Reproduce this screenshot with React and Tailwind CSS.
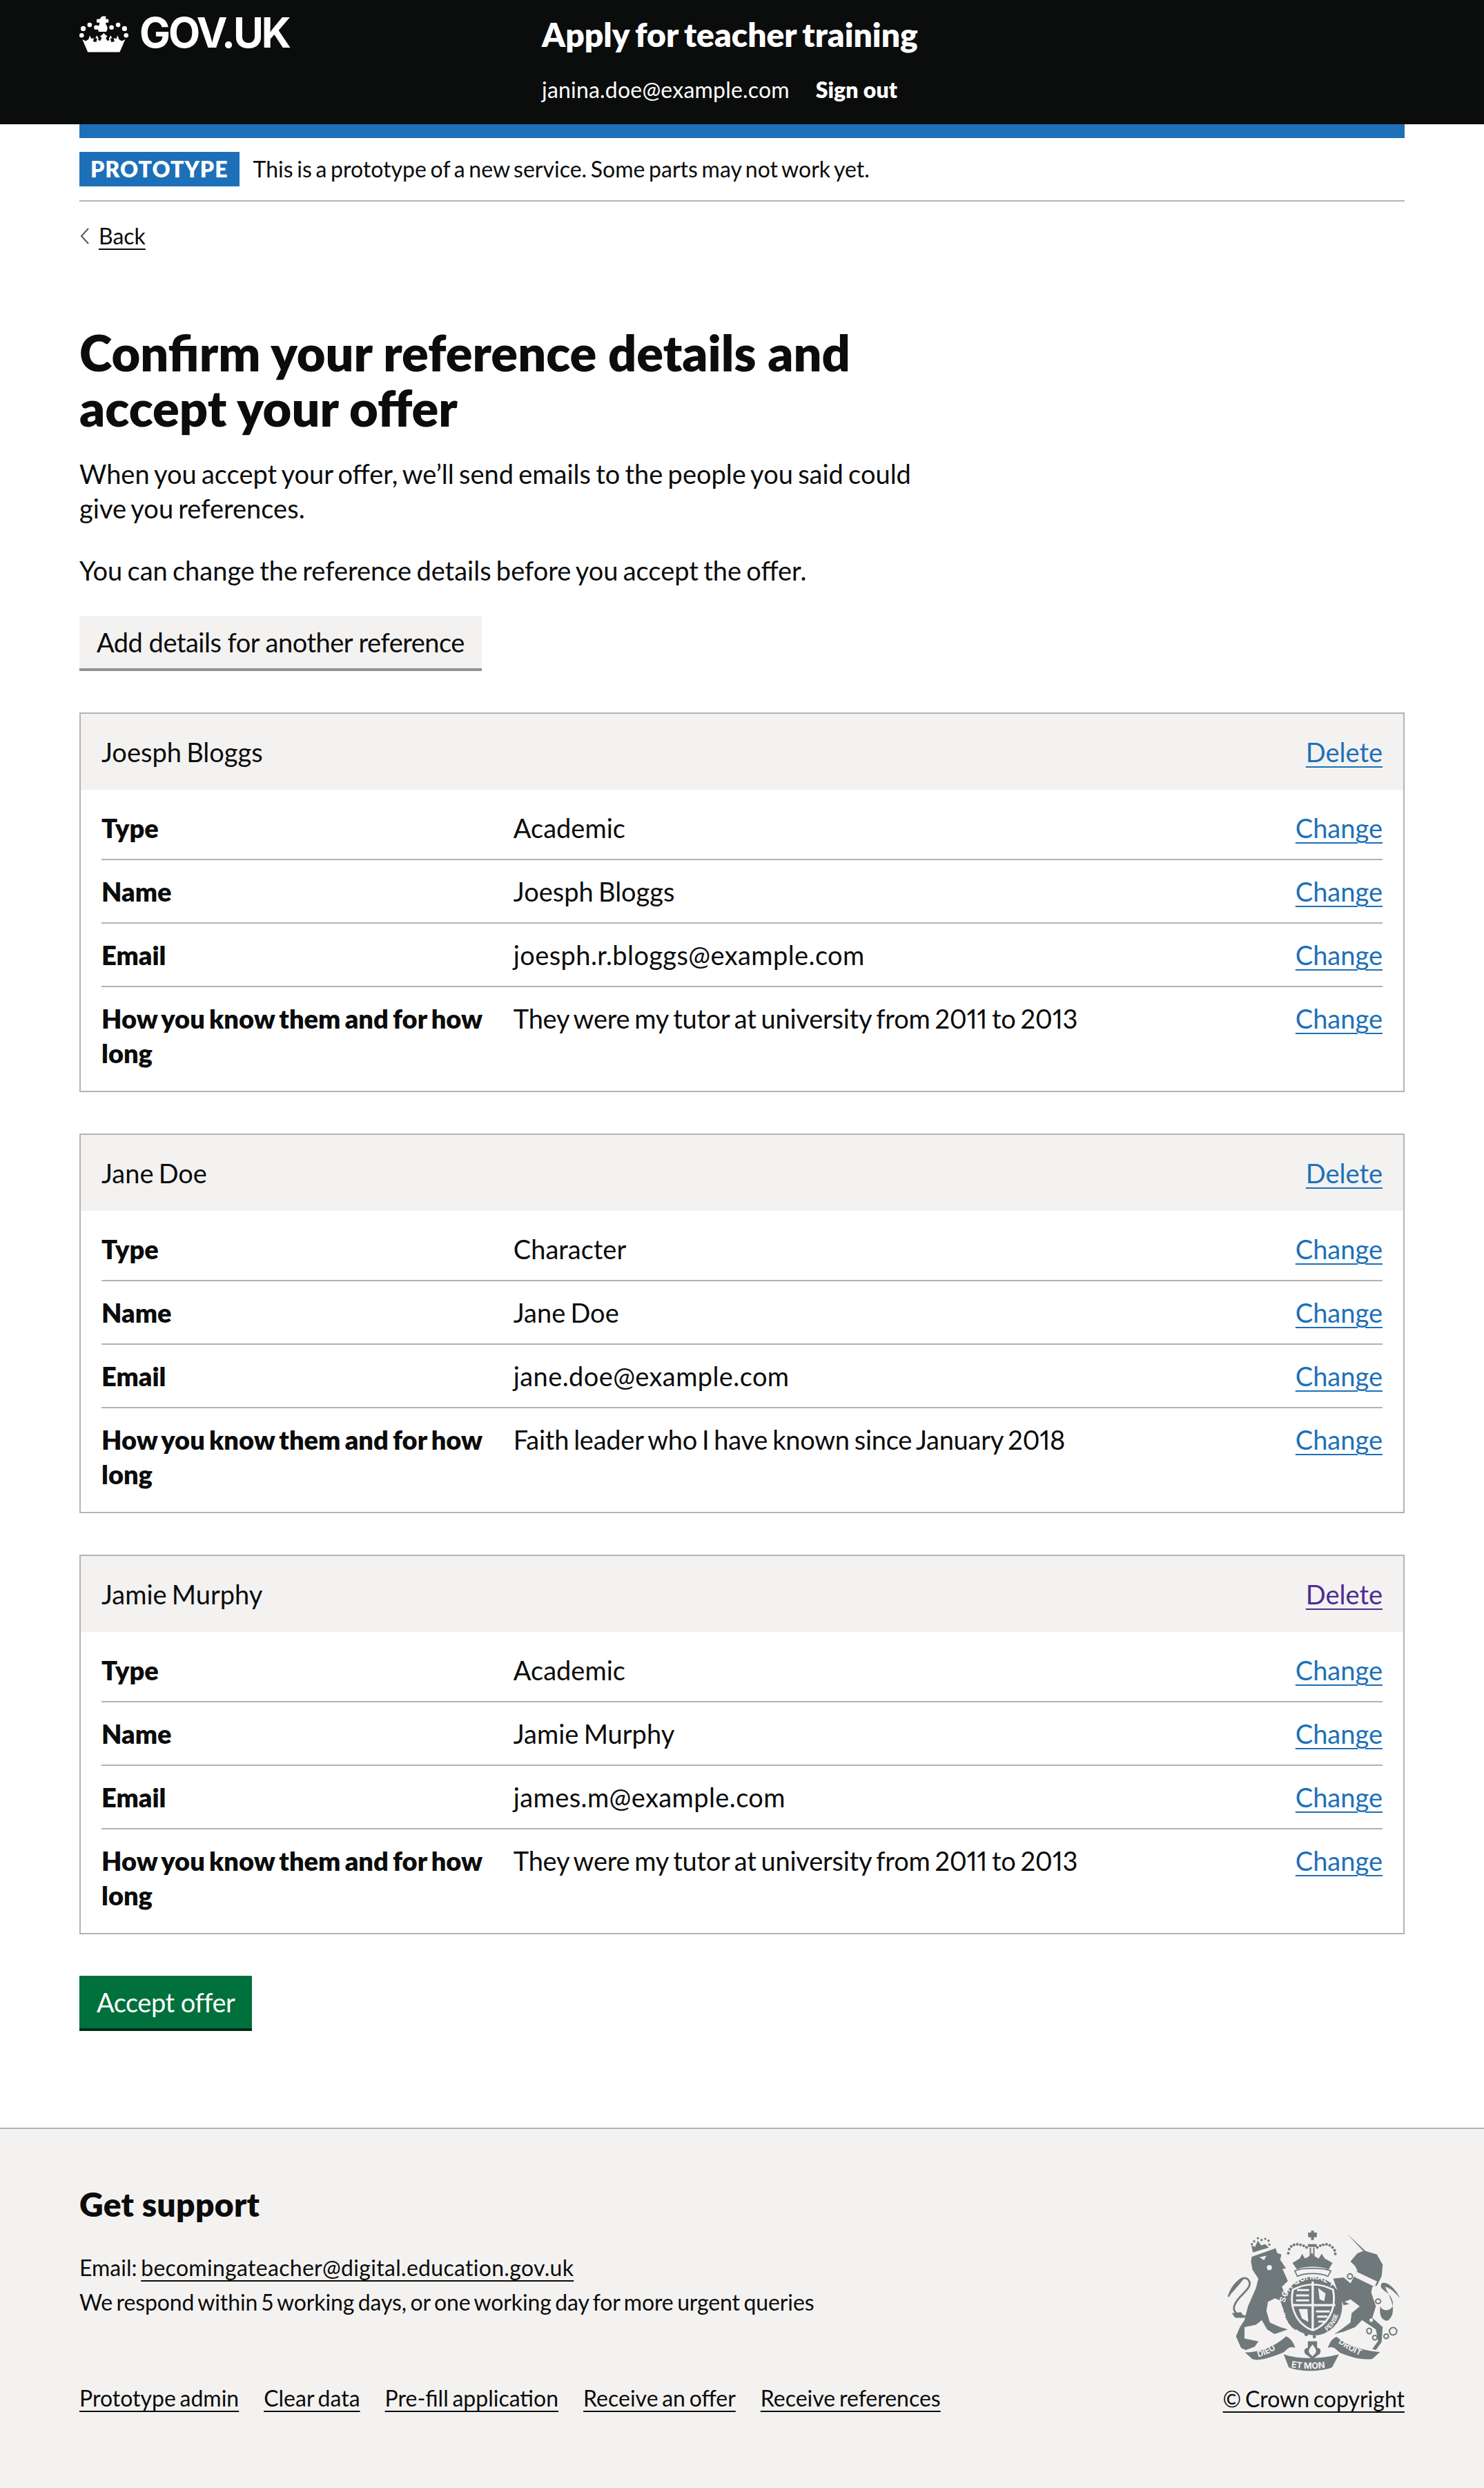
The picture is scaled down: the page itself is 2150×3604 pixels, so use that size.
import React from "react";

const references = [
  {
    name: "Joesph Bloggs",
    type: "Academic",
    email: "joesph.r.bloggs@example.com",
    how: "They were my tutor at university from 2011 to 2013",
  },
  {
    name: "Jane Doe",
    type: "Character",
    email: "jane.doe@example.com",
    how: "Faith leader who I have known since January 2018",
  },
  {
    name: "Jamie Murphy",
    type: "Academic",
    email: "james.m@example.com",
    how: "They were my tutor at university from 2011 to 2013",
    visited: true,
  },
];

const footerLinks = [
  "Prototype admin",
  "Clear data",
  "Pre-fill application",
  "Receive an offer",
  "Receive references",
];

function CrownLogo() {
  const dots = [
    [62, 88, 11],
    [90, 72, 10],
    [119, 83, 10],
    [186, 83, 10],
    [215, 72, 10],
    [243, 88, 11],
    [55, 118, 10],
    [250, 118, 10],
  ];
  return (
    <svg viewBox="45 30 218 162" className="w-[72px] h-[54px] shrink-0" fill="#ffffff">
      {dots.map(([cx, cy, r], i) => (
        <circle key={i} cx={cx} cy={cy} r={r} />
      ))}
      <path d="M145 34h16v13h12v15h-12v8c8 8 10 20 2 32h-32c-8-12-6-24 2-32v-8h-12V47h12z" />
      <path d="M58 135l15 8 12-8 6-17 6 14 12-2-4 14 14 3 4-16h-8l7-13 7 13-2 8 10 2 6-12-7-8 10-6 6-8 6 8 10 6-7 8 6 12 10-2-2-8 7-13 7 13h-8l4 16 14-3-4-14 12 2 6-14 6 17 12 8 15-8-24 56H82z" />
    </svg>
  );
}

function RoyalCrest() {
  const grey = "#6f787b";
  const paper = "#f3f2f1";
  return (
    <svg viewBox="115 88 755 614" className="w-[252px] h-[205px]" fill={grey}>
      <defs>
        <path id="garterTop" d="M366 405 A121 121 0 0 1 600 385" />
        <path id="garterRight" d="M548 528 A122 122 0 0 0 600 420" />
        <path id="garterLeft" d="M392 510 A122 122 0 0 1 366 440" />
        <path id="dieu" d="M250 640 Q310 625 358 580" />
        <path id="droit" d="M596 578 Q650 620 722 645" />
        <path id="etmon" d="M392 684 Q480 700 572 682" />
      </defs>

      {/* lion */}
      <path d="M222 205 L325 168 L332 188 L350 195 L345 218 L370 255 L355 258 L378 310 L352 335 L390 420 L385 450 L358 432 L345 395 L322 385 L292 400 L285 440 L300 490 L345 510 L378 520 L345 532 L320 540 L288 520 L265 480 L240 500 L190 510 L190 560 L250 572 L235 595 L195 610 L175 600 L153 550 L170 510 L190 480 L205 420 L240 340 L250 300 L225 262 L218 225 Z" />
      <path d="M205 465 C140 460 125 430 170 380 C205 345 225 325 205 303 C185 285 150 310 120 378" fill="none" stroke={grey} strokeWidth="8" />
      <path d="M118 380 C125 345 150 305 188 297 C170 325 150 345 118 380Z" />
      <path d="M135 450 L175 445 L190 470 L150 470Z" />
      <path d="M226 186 L220 155 L236 162 L248 135 L262 155 L280 150 L296 165 Z" />
      {[[222, 150], [232, 138], [248, 124], [264, 132], [280, 127], [294, 135], [298, 152]].map(([cx, cy], i) => (
        <circle key={i} cx={cx} cy={cy} r="5" />
      ))}
      <circle cx="298" cy="252" r="11" fill={paper} />
      <path d="M255 207 L285 200 L275 220Z" fill={paper} />

      {/* shield and garter */}
      <circle cx="486" cy="420" r="128" />
      <path d="M396 345 Q486 298 578 345 Q596 430 545 490 Q515 520 486 528 Q457 520 428 490 Q378 430 396 345Z" fill={paper} />
      <path d="M404 350 Q486 308 570 350 Q586 430 538 484 Q512 512 486 519 Q460 512 434 484 Q388 430 404 350Z" />
      <path d="M481 312h10v212h-10zM396 410h188v10h-188z" fill={paper} />
      <path d="M418 345h52v9h-52zM414 368h56v9h-56zM414 390h56v9h-56zM500 438h60v9h-60zM505 460h45v9h-45zM510 482h28v8h-28z" fill={paper} />
      <path d="M510 340l32 24-6 34-20-8z" fill={paper} />
      <path d="M425 432h38l4 56-28-16z" fill={paper} />
      <g fontFamily="Inter, sans-serif" fontWeight="700" fill={paper}>
        <text fontSize="35">
          <textPath href="#garterTop">SOIT QUI MAL Y</textPath>
        </text>
        <text fontSize="27">
          <textPath href="#garterRight">PENSE</textPath>
        </text>
        <text fontSize="27">
          <textPath href="#garterLeft">HONI</textPath>
        </text>
      </g>
      <path d="M412 518 C450 550 520 555 590 530 L580 548 C520 575 450 570 415 548Z" fill={paper} />
      <circle cx="458" cy="541" r="8" />
      <circle cx="493" cy="552" r="7" />

      {/* big crown */}
      <path d="M408 266 C440 252 530 252 565 266 L552 290 C520 274 450 274 420 290Z" fill={paper} stroke={grey} strokeWidth="5" />
      <path d="M398 232 L430 212 L440 192 L452 212 L468 205 L482 188 L497 205 L512 212 L525 192 L538 212 L572 232 L555 260 C520 244 450 244 418 260Z" />
      <path d="M466 100h13v-8h12v8h13v20h-13v12h-12v-12h-13z" />
      <rect x="465" y="150" width="38" height="12" />
      <rect x="473" y="165" width="6" height="35" />
      <rect x="488" y="165" width="6" height="35" />
      {[
        [380, 190], [384, 172], [393, 160], [405, 153], [419, 151], [433, 153], [447, 157], [459, 164],
        [506, 164], [519, 157], [532, 153], [546, 151], [560, 155], [572, 164], [581, 177], [584, 192],
      ].map(([cx, cy], i) => (
        <circle key={i} cx={cx} cy={cy} r="6" />
      ))}

      {/* unicorn */}
      <path d="M635 105 L715 180 L765 195 L790 240 L785 290 L765 330 L745 335 L740 360 L760 420 L745 470 L790 510 L785 575 L760 610 L745 605 L770 570 L760 520 L700 480 L670 510 L620 530 L580 540 L610 520 L650 490 L655 450 L690 420 L650 390 L625 400 L645 410 L620 415 L600 370 L575 300 L620 295 L650 320 L680 265 L670 245 L650 225 L680 190 L705 180 Z" />
      <path d="M672 268 L765 312 L755 335 L666 292Z" fill={paper} />
      <circle cx="740" cy="480" r="8" fill={paper} />
      <circle cx="763" cy="443" r="7" fill={paper} />
      <path d="M780 420 C790 450 850 440 830 390 C815 350 770 350 785 320 C800 310 840 330 865 385 C835 350 820 340 800 335 C815 370 860 440 815 480 C800 490 770 470 780 420Z" />
      <g fill="none" stroke={grey} strokeWidth="6">
        <circle cx="648" cy="290" r="11" />
        <circle cx="636" cy="375" r="11" />
        <ellipse cx="770" cy="398" rx="11" ry="10" />
        <ellipse cx="731" cy="527" rx="10" ry="12" />
        <circle cx="756" cy="556" r="10" />
        <circle cx="805" cy="550" r="10" />
        <circle cx="835" cy="528" r="16" />
      </g>

      {/* motto */}
      <path d="M192 620 C260 620 330 590 370 550 C395 560 405 585 410 600 C380 590 372 612 360 620 C320 635 260 660 225 650Z" />
      <path d="M778 618 C720 615 630 590 590 552 C565 560 555 590 552 600 C580 590 590 612 605 622 C650 640 700 655 745 648Z" />
      <path d="M360 628 C420 650 520 650 600 628 L570 685 C520 705 430 705 382 685Z" />
      <path d="M465 572h40v28c18 0 22 22 4 32l-24 18-24-18c-18-10-14-32 4-32z" />
      <path d="M485 585c-10 15-22 25-12 40l12 12 12-12c10-15-2-25-12-40z" fill={paper} />
      <g fontFamily="Inter, sans-serif" fontWeight="700" fill={paper}>
        <text fontSize="36">
          <textPath href="#dieu">DIEU</textPath>
        </text>
        <text fontSize="36">
          <textPath href="#droit">DROIT</textPath>
        </text>
        <text fontSize="38">
          <textPath href="#etmon">ET MON</textPath>
        </text>
      </g>
    </svg>
  );
}

function Row({ label, value, last, valueClass = "" }) {
  return (
    <div className={`flex ${last ? "" : "border-b-2 border-[#b1b4b6]"}`}>
      <div className="w-[30%] py-[20px] font-extrabold">{label}</div>
      <div className={`w-[50%] pr-[40px] py-[20px] pl-[40px] ${valueClass}`}>{value}</div>
      <div className="w-[20%] py-[20px] text-right">
        <a href="#" className="text-[#1d70b8] underline decoration-2 underline-offset-[6px]">
          Change
        </a>
      </div>
    </div>
  );
}

function ReferenceCard({ reference }) {
  return (
    <div className="border-2 border-[#b1b4b6] mb-[60px]">
      <div className="flex justify-between bg-[#f3f2f1] px-[30px] py-[30px]">
        <span>{reference.name}</span>
        <a
          href="#"
          className={`underline decoration-2 underline-offset-[6px] ${
            reference.visited ? "text-[#4c2c92]" : "text-[#1d70b8]"
          }`}
        >
          Delete
        </a>
      </div>
      <div className="px-[30px] pt-[10px] pb-[10px]">
        <Row label="Type" value={reference.type} />
        <Row label="Name" value={reference.name} />
        <Row label="Email" value={reference.email} valueClass="tracking-[0.4px]" />
        <Row
          label="How you know them and for how long"
          value={reference.how}
          valueClass="tracking-[-0.25px]"
          last
        />
      </div>
    </div>
  );
}

export default function App() {
  return (
    <div className="min-h-screen flex flex-col bg-white text-[#0b0c0c] text-[38px] leading-[50px] proportional-nums [word-spacing:-2.5px] font-['Lato',sans-serif]">
      <header className="bg-[#0b0c0c] h-[180px] text-white shrink-0">
        <div className="mx-[115px] flex">
          <div className="w-[670px] flex items-start gap-[15px] pt-[22px]">
            <CrownLogo />
            <span className="text-[60px] leading-[50px] font-bold font-['Inter',sans-serif] tracking-[-3px]">GOV.UK</span>
          </div>
          <div className="pt-[25px]">
            <div className="text-[48px] leading-[50px] font-extrabold">Apply for teacher training</div>
            <div className="flex gap-[38px] text-[32px] leading-[40px] mt-[35px]">
              <span className="tracking-[0.2px]">janina.doe@example.com</span>
              <span className="font-extrabold [word-spacing:0px]">Sign out</span>
            </div>
          </div>
        </div>
      </header>

      <main className="mx-[115px] flex-1">
        <div className="h-[20px] bg-[#1d70b8]" />
        <div className="flex items-center gap-[20px] pt-[20px] pb-[20px] border-b-2 border-[#b1b4b6] text-[32px] leading-[50px]">
          <span className="bg-[#1d70b8] text-white font-extrabold tracking-[1px] px-[16px] h-[50px] flex items-center">
            PROTOTYPE
          </span>
          <span>This is a prototype of a new service. Some parts may not work yet.</span>
        </div>

        <div className="flex items-center gap-[12px] mt-[30px] text-[32px] leading-[40px]">
          <svg viewBox="0 0 16 24" className="w-[16px] h-[24px]" fill="none" stroke="#505a5f" strokeWidth="2">
            <path d="M13 1 L3 12 L13 23" />
          </svg>
          <a href="#" className="underline decoration-2 underline-offset-[6px]">
            Back
          </a>
        </div>

        <h1 className="text-[72px] leading-[80px] font-extrabold mt-[108px] w-[1260px] [word-spacing:0px]">
          Confirm your reference details and accept your offer
        </h1>
        <p className="mt-[31px] w-[1260px]">
          When you accept your offer, we’ll send emails to the people you said could give you references.
        </p>
        <p className="mt-[40px]">You can change the reference details before you accept the offer.</p>

        <button className="block mt-[41px] mb-[64px] bg-[#f3f2f1] px-[25px] h-[76px] tracking-[-0.5px] shadow-[0_4px_0_#929191]">
          Add details for another reference
        </button>

        {references.map((reference) => (
          <ReferenceCard key={reference.name} reference={reference} />
        ))}

        <button className="block bg-[#00703c] text-white px-[25px] h-[76px] tracking-[-0.5px] shadow-[0_4px_0_#002d18]">
          Accept offer
        </button>
      </main>

      <footer className="mt-[144px] border-t-2 border-[#b1b4b6] bg-[#f3f2f1] text-[32px] leading-[50px] shrink-0">
        <div className="mx-[115px] flex justify-between h-[520px]">
          <div className="flex flex-col">
            <h2 className="text-[48px] leading-[60px] font-extrabold mt-[79px] tracking-[0.3px] [word-spacing:0px]">Get support</h2>
            <p className="mt-[37px]">
              Email:{" "}
              <a href="#" className="tracking-[0.3px] underline decoration-2 underline-offset-[6px]">
                becomingateacher@digital.education.gov.uk
              </a>
            </p>
            <p className="tracking-[-0.12px]">We respond within 5 working days, or one working day for more urgent queries</p>
            <div className="flex gap-[36px] mt-[94px] leading-[40px]">
              {footerLinks.map((link) => (
                <a key={link} href="#" className="underline decoration-2 underline-offset-[6px]">
                  {link}
                </a>
              ))}
            </div>
          </div>
          <div className="flex flex-col items-end">
            <div className="mt-[146px] mr-[5px]">
              <RoyalCrest />
            </div>
            <a href="#" className="mt-[20px] leading-[40px] underline decoration-2 underline-offset-[6px]">
              © Crown copyright
            </a>
          </div>
        </div>
      </footer>
    </div>
  );
}
